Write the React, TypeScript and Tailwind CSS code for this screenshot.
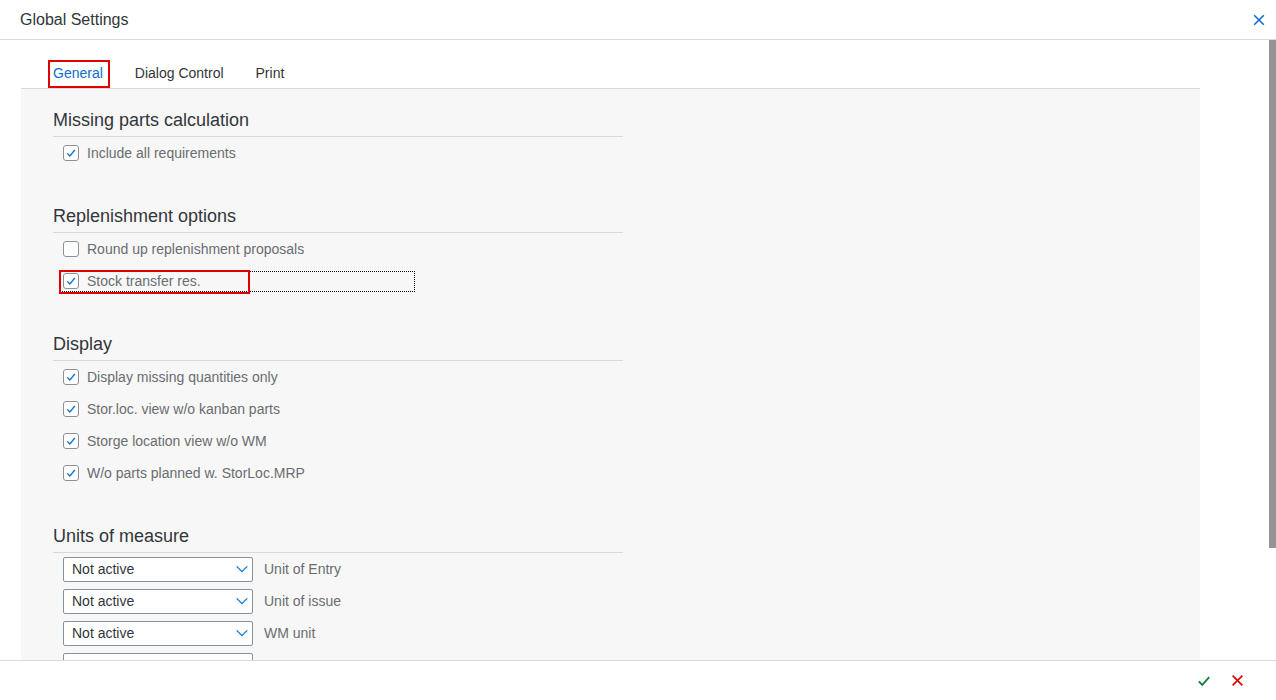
import React from 'react';

const font = { fontFamily: '"Liberation Sans", Arial, sans-serif' };

const Check = () => (
  <svg viewBox="0 0 16 16" className="w-[12px] h-[12px]">
    <path d="M3 8.5 L6.5 12 L13 4" fill="none" stroke="#0a6ed1" strokeWidth="1.6" />
  </svg>
);

const Checkbox = ({ checked }: { checked: boolean }) => (
  <div className="w-[16px] h-[16px] rounded-[3px] border border-[#89919a] bg-white flex items-center justify-center shrink-0">
    {checked && <Check />}
  </div>
);

const CheckRow = ({ label, checked, focused }: { label: string; checked: boolean; focused?: boolean }) => (
  <div className="h-[32px] flex items-center pl-[10px] relative">
    <Checkbox checked={checked} />
    <span className="ml-[8px] text-[14px] text-[#6a6d70]">{label}</span>
    {focused && (
      <>
        <div className="absolute left-[7px] top-[6px] w-[355px] h-[21px] border border-dotted border-black" />
        <div className="absolute left-[6px] top-[5px] w-[191px] h-[24px] border-2 border-[#e00000]" />
      </>
    )}
  </div>
);

const Heading = ({ title }: { title: string }) => (
  <div className="h-[29px] pb-[4px] border-b border-[#d9d9d9] text-[18px] leading-[24px] text-[#32363a]">{title}</div>
);

const SelectRow = ({ label }: { label?: string }) => (
  <div className="h-[32px] flex items-center pl-[10px]">
    <div className="w-[190px] h-[25px] border border-[#89919a] rounded-[2px] bg-white flex items-center justify-between pl-[8px] pr-[3px]">
      {label && <span className="text-[14px] text-[#32363a]">Not active</span>}
      {label && (
        <svg viewBox="0 0 16 16" className="w-[14px] h-[14px]">
          <path d="M2 5 L8 11 L14 5" fill="none" stroke="#0a6ed1" strokeWidth="1.3" />
        </svg>
      )}
    </div>
    {label && <span className="ml-[11px] text-[14px] text-[#6a6d70]">{label}</span>}
  </div>
);

const App: React.FC = () => {
  return (
    <div className="w-[1276px] h-[700px] bg-white flex flex-col overflow-hidden" style={font}>
      {/* Header */}
      <div className="h-[40px] shrink-0 border-b border-[#d9d9d9] flex items-center justify-between pl-[20px] pr-[10px]">
        <span className="text-[16px] text-[#32363a]">Global Settings</span>
        <svg viewBox="0 0 16 16" className="w-[14px] h-[14px]">
          <path d="M2.5 2.5 L13.5 13.5 M13.5 2.5 L2.5 13.5" stroke="#0a6ed1" strokeWidth="1.8" />
        </svg>
      </div>

      {/* Body */}
      <div className="flex-1 relative overflow-hidden">
        <div className="ml-[21px] w-[1179px] h-full flex flex-col">
          {/* Tabs */}
          <div className="h-[49px] shrink-0 flex items-end border-b border-[#d9d9d9] pl-[16px]">
            <div className="relative h-[48px] px-[16px] flex items-center pt-[18px]">
              <span className="text-[14px] text-[#0a6ed1]">General</span>
              <div className="absolute left-[16px] right-[16px] bottom-0 h-[2px] bg-[#0a6ed1]" />
              <div className="absolute left-[11px] right-[9px] top-[20px] bottom-0 border-2 border-[#e00000]" />
            </div>
            <div className="h-[48px] px-[16px] flex items-center pt-[18px]">
              <span className="text-[14px] text-[#32363a]">Dialog Control</span>
            </div>
            <div className="h-[48px] px-[16px] flex items-center pt-[18px]">
              <span className="text-[14px] text-[#32363a]">Print</span>
            </div>
          </div>

          {/* Content */}
          <div className="flex-1 bg-[#f7f7f7] pl-[32px] pt-[19px]">
            <div className="w-[570px] flex flex-col">
              <Heading title="Missing parts calculation" />
              <CheckRow label="Include all requirements" checked />

              <div className="h-[35px]" />
              <Heading title="Replenishment options" />
              <CheckRow label="Round up replenishment proposals" checked={false} />
              <CheckRow label="Stock transfer res." checked focused />

              <div className="h-[35px]" />
              <Heading title="Display" />
              <CheckRow label="Display missing quantities only" checked />
              <CheckRow label="Stor.loc. view w/o kanban parts" checked />
              <CheckRow label="Storge location view w/o WM" checked />
              <CheckRow label="W/o parts planned w. StorLoc.MRP" checked />

              <div className="h-[35px]" />
              <Heading title="Units of measure" />
              <SelectRow label="Unit of Entry" />
              <SelectRow label="Unit of issue" />
              <SelectRow label="WM unit" />
              <SelectRow />
            </div>
          </div>
        </div>

        {/* Scrollbar */}
        <div className="absolute right-0 top-0 w-[7px] h-[508px] bg-[#949494]" />
      </div>

      {/* Footer */}
      <div className="h-[40px] shrink-0 border-t border-[#d9d9d9] flex items-center justify-end gap-[20px] pr-[32px]">
        <svg viewBox="0 0 16 16" className="w-[14px] h-[14px]">
          <path d="M2 8.5 L6 12.5 L14 3.5" fill="none" stroke="#107e3e" strokeWidth="2" />
        </svg>
        <svg viewBox="0 0 16 16" className="w-[13px] h-[13px]">
          <path d="M2 2 L14 14 M14 2 L2 14" stroke="#e00000" strokeWidth="2" />
        </svg>
      </div>
    </div>
  );
};

export default App;
